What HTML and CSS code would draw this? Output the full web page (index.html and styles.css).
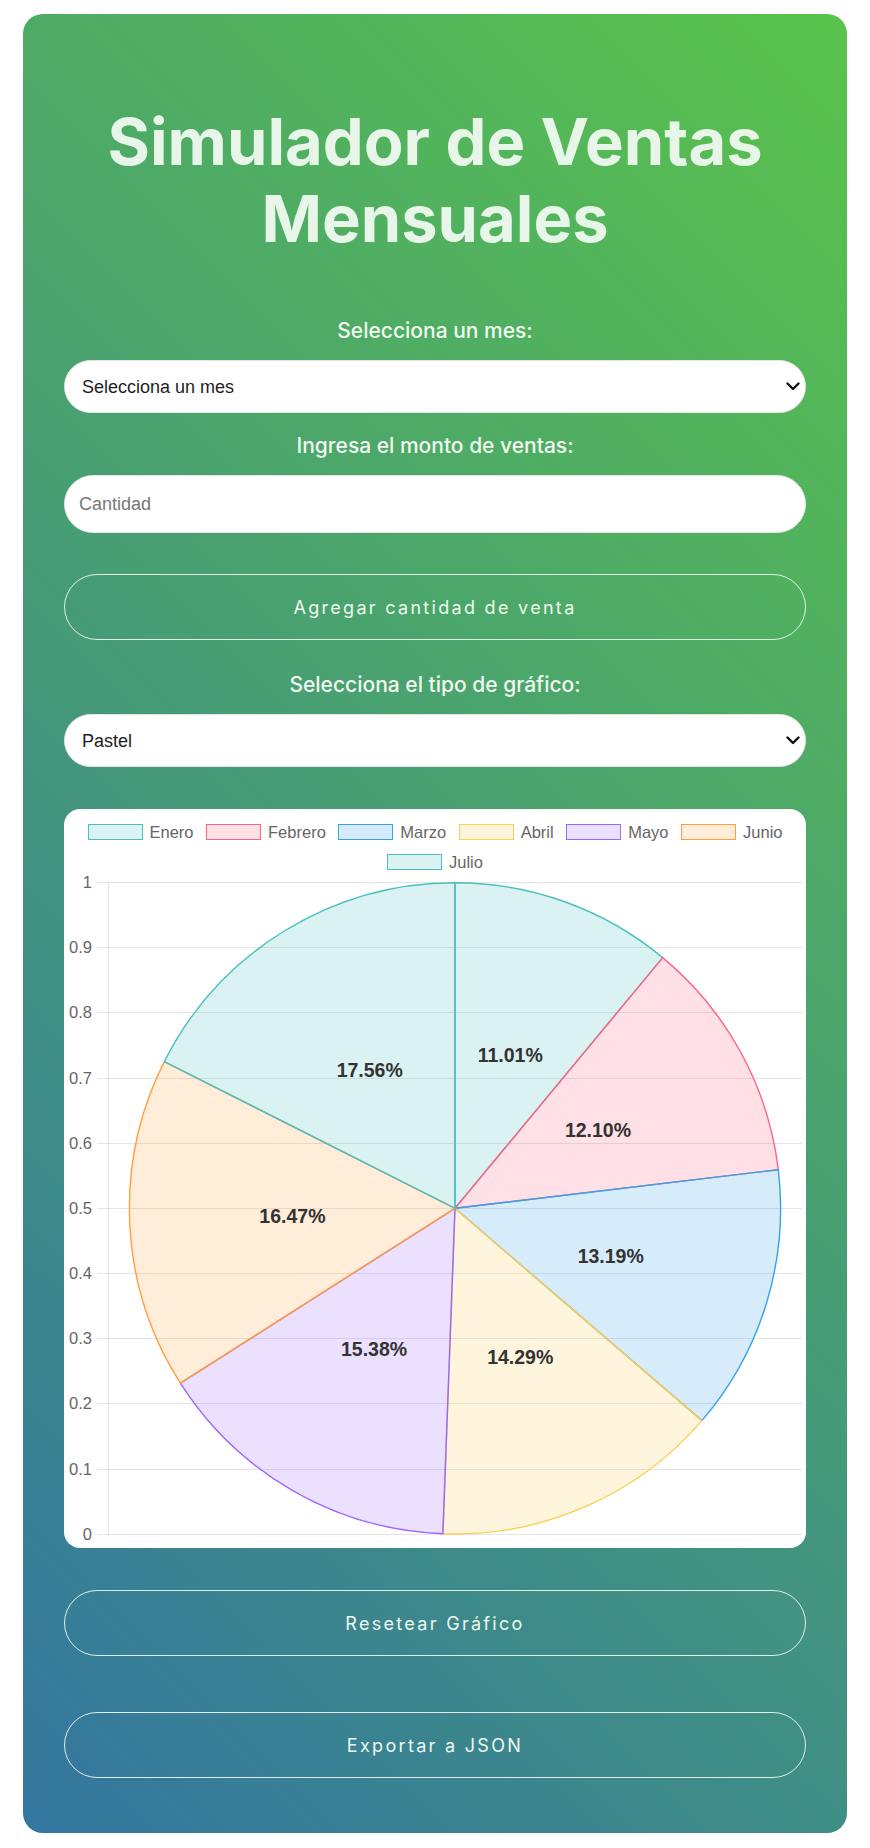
FILE: index.html
```html
<!DOCTYPE html>
<html lang="es">
<head>
<meta charset="utf-8">
<title>Simulador de Ventas Mensuales</title>
<link rel="stylesheet" href="styles.css">
</head>
<body>
<main class="card">
  <h1 class="title">Simulador de Ventas Mensuales</h1>

  <label class="field-label" for="mes">Selecciona un mes:</label>
  <div class="select-wrap">
    <select id="mes" class="field field-select">
      <option>Selecciona un mes</option>
      <option>Enero</option><option>Febrero</option><option>Marzo</option>
      <option>Abril</option><option>Mayo</option><option>Junio</option>
      <option>Julio</option>
    </select>
    <svg class="chevron" width="14" height="9" viewBox="0 0 14 9"><path d="M1.5 1.5 L7 7 L12.5 1.5" fill="none" stroke="#111" stroke-width="2.4" stroke-linecap="round" stroke-linejoin="round"/></svg>
  </div>

  <label class="field-label label-amount" for="monto">Ingresa el monto de ventas:</label>
  <input id="monto" class="field field-input" type="number" placeholder="Cantidad">

  <button class="btn btn-add" type="button">Agregar cantidad de venta</button>

  <label class="field-label label-type" for="tipo">Selecciona el tipo de gráfico:</label>
  <div class="select-wrap">
    <select id="tipo" class="field field-select">
      <option>Pastel</option>
      <option>Barras</option>
      <option>Líneas</option>
    </select>
    <svg class="chevron" width="14" height="9" viewBox="0 0 14 9"><path d="M1.5 1.5 L7 7 L12.5 1.5" fill="none" stroke="#111" stroke-width="2.4" stroke-linecap="round" stroke-linejoin="round"/></svg>
  </div>

  <section class="chart-card">
    <ul class="legend">
      <li class="legend-item"><span class="swatch c-teal"></span>Enero</li>
      <li class="legend-item"><span class="swatch c-pink"></span>Febrero</li>
      <li class="legend-item"><span class="swatch c-blue"></span>Marzo</li>
      <li class="legend-item"><span class="swatch c-yellow"></span>Abril</li>
      <li class="legend-item"><span class="swatch c-purple"></span>Mayo</li>
      <li class="legend-item"><span class="swatch c-orange"></span>Junio</li>
      <li class="legend-item"><span class="swatch c-teal"></span>Julio</li>
    </ul>
    <svg class="plot" width="743" height="671" viewBox="65 877 743 671">
      <g class="grid">
        <line x1="98" y1="882.5" x2="803" y2="882.5"/>
        <line x1="98" y1="947.5" x2="803" y2="947.5"/>
        <line x1="98" y1="1012.5" x2="803" y2="1012.5"/>
        <line x1="98" y1="1078.5" x2="803" y2="1078.5"/>
        <line x1="98" y1="1143.5" x2="803" y2="1143.5"/>
        <line x1="98" y1="1208.5" x2="803" y2="1208.5"/>
        <line x1="98" y1="1273.5" x2="803" y2="1273.5"/>
        <line x1="98" y1="1338.5" x2="803" y2="1338.5"/>
        <line x1="98" y1="1403.5" x2="803" y2="1403.5"/>
        <line x1="98" y1="1469.5" x2="803" y2="1469.5"/>
        <line x1="98" y1="1534.5" x2="803" y2="1534.5"/>
        <line x1="109.5" y1="882.5" x2="109.5" y2="1534.5"/>
      </g>
      <g class="ticks">
        <text x="93" y="882.5" dy="0.35em">1</text>
        <text x="93" y="947.5" dy="0.35em">0.9</text>
        <text x="93" y="1012.5" dy="0.35em">0.8</text>
        <text x="93" y="1078.5" dy="0.35em">0.7</text>
        <text x="93" y="1143.5" dy="0.35em">0.6</text>
        <text x="93" y="1208.5" dy="0.35em">0.5</text>
        <text x="93" y="1273.5" dy="0.35em">0.4</text>
        <text x="93" y="1338.5" dy="0.35em">0.3</text>
        <text x="93" y="1403.5" dy="0.35em">0.2</text>
        <text x="93" y="1469.5" dy="0.35em">0.1</text>
        <text x="93" y="1534.5" dy="0.35em">0</text>
      </g>
      <g class="slices">
        <path class="s-teal" d="M456 1208.3 L456 882.7 A325.6 325.6 0 0 1 663.7 957.6 Z"/>
        <path class="s-pink" d="M456 1208.3 L663.7 957.6 A325.6 325.6 0 0 1 779.3 1169.7 Z"/>
        <path class="s-blue" d="M456 1208.3 L779.3 1169.7 A325.6 325.6 0 0 1 702.9 1420.6 Z"/>
        <path class="s-yellow" d="M456 1208.3 L702.9 1420.6 A325.6 325.6 0 0 1 443.9 1533.7 Z"/>
        <path class="s-purple" d="M456 1208.3 L443.9 1533.7 A325.6 325.6 0 0 1 181.4 1383.2 Z"/>
        <path class="s-orange" d="M456 1208.3 L181.4 1383.2 A325.6 325.6 0 0 1 165.3 1061.6 Z"/>
        <path class="s-teal" d="M456 1208.3 L165.3 1061.6 A325.6 325.6 0 0 1 456 882.7 Z"/>
      </g>
      <g class="pct">
        <text x="511.2" y="1055.1" dy="0.35em">11.01%</text>
        <text x="599" y="1130.4" dy="0.35em">12.10%</text>
        <text x="611.7" y="1255.7" dy="0.35em">13.19%</text>
        <text x="521.2" y="1357.5" dy="0.35em">14.29%</text>
        <text x="375.1" y="1349.6" dy="0.35em">15.38%</text>
        <text x="293.4" y="1216.4" dy="0.35em">16.47%</text>
        <text x="370.7" y="1069.7" dy="0.35em">17.56%</text>
      </g>
    </svg>
  </section>

  <button class="btn btn-reset" type="button">Resetear Gráfico</button>
  <button class="btn btn-export" type="button">Exportar a JSON</button>
</main>
</body>
</html>
```

FILE: styles.css
```css
* { box-sizing: border-box; }

html, body {
  margin: 0;
  padding: 0;
  background: #ffffff;
}

body {
  font-family: Inter, "Noto Sans", sans-serif;
}

.card {
  width: 824px;
  margin: 14px auto 0;
  padding: 40px 41px 55px;
  border-radius: 20px;
  background: linear-gradient(45deg, #3376a0 0%, #5ac34b 100%);
  display: flex;
  flex-direction: column;
}

.title {
  margin: 49px 0 62px;
  font-family: Inter, sans-serif;
  font-weight: 700;
  font-size: 65px;
  line-height: 77px;
  text-align: center;
  color: #e8f5e9;
}

.field-label {
  display: block;
  margin: 0 0 17px;
  font-family: Inter, sans-serif;
  font-weight: 500;
  font-size: 21px;
  line-height: 24px;
  text-align: center;
  color: #f1f8f1;
}

.select-wrap {
  position: relative;
}

.field {
  display: block;
  width: 100%;
  border: 1px solid #e6e6e6;
  border-radius: 30px;
  background: #ffffff;
  font-family: "Liberation Sans", Arial, sans-serif;
  font-size: 18px;
  color: #1e1e1e;
  outline: none;
}

.field-select {
  height: 53px;
  padding: 0 40px 0 17px;
  -webkit-appearance: none;
  appearance: none;
}

.chevron {
  position: absolute;
  right: 6px;
  top: 22px;
  pointer-events: none;
}

.field-input {
  height: 58px;
  padding: 0 14px;
}

.field-input::placeholder {
  color: #767676;
}

.btn {
  display: block;
  width: 100%;
  height: 66px;
  border: 1.5px solid rgba(240, 250, 240, 0.9);
  border-radius: 34px;
  background: transparent;
  font-family: Inter, sans-serif;
  font-weight: 400;
  font-size: 18px;
  letter-spacing: 2.3px;
  color: #eef8ee;
  cursor: pointer;
}

.label-amount { margin-top: 21px; }
.btn-add { margin-top: 41px; }
.label-type { margin-top: 33px; }
.btn-reset { margin-top: 42px; }
.btn-export { margin-top: 56px; }

.chart-card {
  margin-top: 42px;
  height: 739px;
  background: #ffffff;
  border-radius: 16px;
  overflow: hidden;
}

.legend {
  list-style: none;
  margin: 0;
  padding: 8px 10px 0;
  height: 68px;
  display: flex;
  flex-wrap: wrap;
  justify-content: center;
  column-gap: 12.5px;
}

.legend-item {
  height: 30px;
  display: flex;
  align-items: center;
  gap: 7px;
  font-family: "Liberation Sans", Arial, sans-serif;
  font-size: 16.5px;
  color: #666666;
}

.swatch {
  display: block;
  width: 55px;
  height: 16.5px;
  border: 1.4px solid;
}

.c-teal   { border-color: rgb(75, 192, 192);  background: rgba(75, 192, 192, 0.2); }
.c-pink   { border-color: rgb(255, 99, 132);  background: rgba(255, 99, 132, 0.2); }
.c-blue   { border-color: rgb(54, 162, 235);  background: rgba(54, 162, 235, 0.2); }
.c-yellow { border-color: rgb(255, 205, 86);  background: rgba(255, 205, 86, 0.2); }
.c-purple { border-color: rgb(153, 102, 255); background: rgba(153, 102, 255, 0.2); }
.c-orange { border-color: rgb(255, 159, 64);  background: rgba(255, 159, 64, 0.2); }

.plot {
  display: block;
  overflow: visible;
}

.grid line {
  stroke: rgba(0, 0, 0, 0.1);
  stroke-width: 1;
}

.ticks text {
  font-family: "Liberation Sans", Arial, sans-serif;
  font-size: 16.5px;
  fill: #666666;
  text-anchor: end;
}

.slices path { stroke-width: 1.4; stroke-linejoin: round; }
.s-teal   { stroke: rgb(75, 192, 192);  fill: rgba(75, 192, 192, 0.2); }
.s-pink   { stroke: rgb(255, 99, 132);  fill: rgba(255, 99, 132, 0.2); }
.s-blue   { stroke: rgb(54, 162, 235);  fill: rgba(54, 162, 235, 0.2); }
.s-yellow { stroke: rgb(255, 205, 86);  fill: rgba(255, 205, 86, 0.2); }
.s-purple { stroke: rgb(153, 102, 255); fill: rgba(153, 102, 255, 0.2); }
.s-orange { stroke: rgb(255, 159, 64);  fill: rgba(255, 159, 64, 0.2); }

.pct text {
  font-family: "Liberation Sans", Arial, sans-serif;
  font-weight: 700;
  font-size: 19.5px;
  fill: #333333;
  text-anchor: middle;
}
```
